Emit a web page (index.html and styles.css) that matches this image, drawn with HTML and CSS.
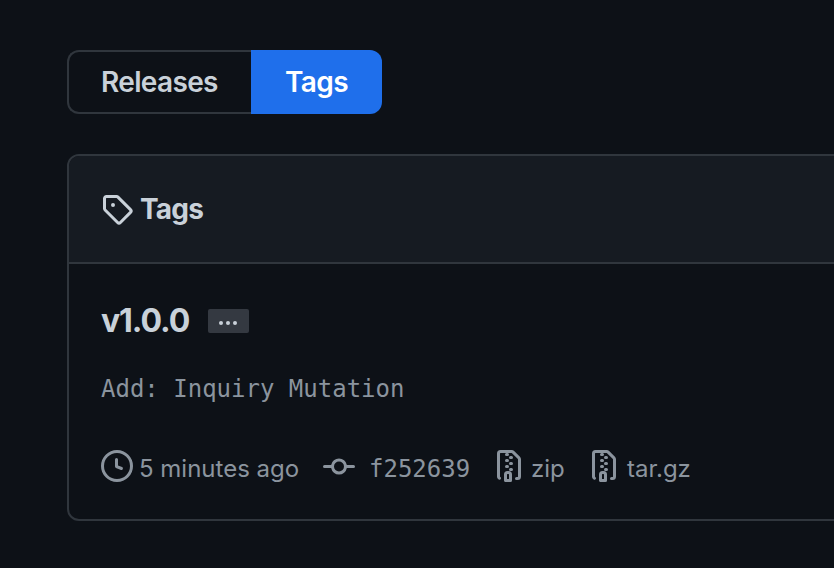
FILE: index.html
```
<!DOCTYPE html>
<html lang="en">
<head>
<meta charset="utf-8">
<title>Tags</title>
<link rel="stylesheet" href="styles.css">
</head>
<body>
<svg width="0" height="0" class="defs" aria-hidden="true">
<symbol id="zip" viewBox="0 0 16 16"><path fill-rule="evenodd" d="M3.5 1.75a.25.25 0 01.25-.25h3a.75.75 0 000 1.5h.5a.75.75 0 000-1.5h2.086a.25.25 0 01.177.073l2.914 2.914a.25.25 0 01.073.177v8.586a.25.25 0 01-.25.25h-.5a.75.75 0 000 1.5h.5A1.75 1.75 0 0014 13.25V4.664c0-.464-.184-.909-.513-1.237L10.573.513A1.75 1.75 0 009.336 0H3.75A1.75 1.75 0 002 1.75v11.5c0 .649.353 1.214.874 1.515a.75.75 0 10.752-1.298.25.25 0 01-.126-.217V1.75zM8.75 3a.75.75 0 000 1.5h.5a.75.75 0 000-1.5h-.5zM6 5.25a.75.75 0 01.75-.75h.5a.75.75 0 010 1.5h-.5A.75.75 0 016 5.25zm2 1.5A.75.75 0 018.75 6h.5a.75.75 0 010 1.5h-.5A.75.75 0 018 6.75zm-1.25.75a.75.75 0 000 1.5h.5a.75.75 0 000-1.5h-.5zM8 9.75A.75.75 0 018.75 9h.5a.75.75 0 010 1.5h-.5A.75.75 0 018 9.75zm-.75.75a1.75 1.75 0 00-1.75 1.75v3c0 .414.336.75.75.75h2.5a.75.75 0 00.75-.75v-3a1.75 1.75 0 00-1.75-1.75h-.5zM7 12.25a.25.25 0 01.25-.25h.5a.25.25 0 01.25.25v2.25H7v-2.25z"/></symbol>
</svg>
<nav class="subnav">
  <a class="tab"><span class="t-releases">Releases</span></a>
  <a class="tab selected"><span class="t-tab">Tags</span></a>
</nav>
<main class="box">
  <header class="box-header">
    <svg class="icon" viewBox="0 0 16 16"><path fill-rule="evenodd" d="M2.5 7.775V2.75a.25.25 0 01.25-.25h5.025a.25.25 0 01.177.073l6.25 6.25a.25.25 0 010 .354l-5.025 5.025a.25.25 0 01-.354 0l-6.25-6.25a.25.25 0 01-.073-.177zm-1.5 0V2.75C1 1.784 1.784 1 2.75 1h5.025c.464 0 .91.184 1.238.513l6.25 6.25a1.75 1.75 0 010 2.474l-5.026 5.026a1.75 1.75 0 01-2.474 0l-6.25-6.25A1.75 1.75 0 011 7.775zM6 5a1 1 0 100 2 1 1 0 000-2z"/></svg>
    <h1 class="heading">Tags</h1>
  </header>
  <section class="row">
    <div class="title-line">
      <h2 class="version">v1.0.0</h2>
      <button class="expander" aria-label="Toggle message"><i></i><i></i><i></i></button>
    </div>
    <pre class="message">Add: Inquiry Mutation</pre>
    <div class="meta">
      <svg class="icon" viewBox="0 0 16 16"><path fill-rule="evenodd" d="M8 0a8 8 0 110 16A8 8 0 018 0zM1.5 8a6.5 6.5 0 1013 0 6.5 6.5 0 00-13 0zm7-3.25v2.992l2.028.812a.75.75 0 01-.557 1.392l-2.5-1A.751.751 0 017 8.25v-3.5a.75.75 0 011.5 0z"/></svg>
      <span class="time">5 minutes ago</span>
      <svg class="icon commit" viewBox="0 0 16 16"><path fill-rule="evenodd" d="M10.5 7.75a2.5 2.5 0 11-5 0 2.5 2.5 0 015 0zm1.43.75a4.002 4.002 0 01-7.86 0H.75a.75.75 0 110-1.5h3.32a4.001 4.001 0 017.86 0h3.32a.75.75 0 110 1.5h-3.32z"/></svg>
      <span class="sha">f252639</span>
      <svg class="icon"><use href="#zip"/></svg>
      <span class="zip">zip</span>
      <svg class="icon"><use href="#zip"/></svg>
      <span class="tar">tar.gz</span>
    </div>
  </section>
</main>
</body>
</html>
```
FILE: styles.css
```
* { box-sizing: border-box; }
body {
  margin: 0;
  height: 568px;
  padding: 50px 0 0 67px;
  overflow: hidden;
  background: #0d1117;
  color: #c9d1d9;
  font-family: Inter, sans-serif;
}
.defs { display: none; }
.subnav { display: flex; width: 315px; height: 64px; }
.tab {
  flex: none;
  width: 184px;
  padding-left: 32px;
  border: 2px solid #30363d;
  border-right: 0;
  border-radius: 12px 0 0 12px;
  font-size: 28px;
  font-weight: 600;
  line-height: 61px;
  white-space: nowrap;
}
.tab.selected {
  width: 131px;
  padding-left: 34px;
  border: 0;
  border-radius: 0 12px 12px 0;
  background: #1f6feb;
  color: #fff;
  line-height: 65px;
}
.t-releases { letter-spacing: -0.65px; }
.t-tab { letter-spacing: -0.6px; }
.box {
  width: 800px;
  height: 367px;
  margin-top: 40px;
  border: 2px solid #30363d;
  border-radius: 12px;
  overflow: hidden;
}
.box-header {
  display: flex;
  align-items: center;
  height: 108px;
  padding: 0 0 0 32px;
  border-bottom: 2px solid #30363d;
  background: #161b22;
}
.icon { flex: none; width: 32px; height: 32px; fill: currentColor; }
.heading { margin: 0 0 0 7px; font-size: 28px; font-weight: 700; line-height: 42px; letter-spacing: -0.8px; }
.row { padding: 33px 0 0 32px; }
.title-line { display: flex; align-items: center; height: 48px; }
.version { width: 107px; margin: 0; font-size: 32px; font-weight: 700; line-height: 48px; letter-spacing: -1.1px; }
.expander {
  display: flex;
  align-items: center;
  justify-content: center;
  gap: 3px;
  width: 41px;
  height: 24px;
  margin: 0;
  padding: 4px 1px 0 0;
  border: 0;
  border-radius: 2px;
  background: #343941;
}
.expander i { width: 4px; height: 4px; border-radius: 50%; background: #c9d1d9; }
.message {
  margin: 26px 0 0;
  color: #8b949e;
  font: 24px/36px "DejaVu Sans Mono", monospace;
}
.meta { display: flex; align-items: center; height: 32px; margin-top: 43px; color: #8b949e; font-size: 24px; white-space: nowrap; }
.meta span { flex: none; padding-top: 6px; line-height: 32px; }
.commit { margin-top: 2px; }
.time { width: 190px; padding-left: 6px; }
.sha { width: 138px; padding-left: 14px; font-family: "DejaVu Sans Mono", monospace; }
.zip { width: 63px; padding-left: 6px; }
.tar { padding-left: 7px; }
```
